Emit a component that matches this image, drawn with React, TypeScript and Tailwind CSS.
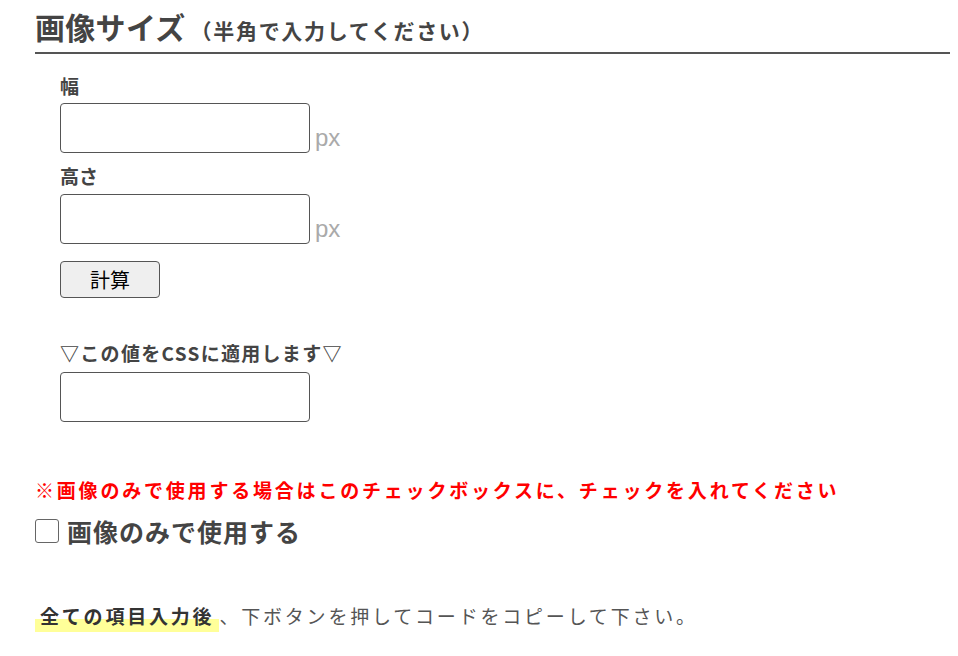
import React from "react";

export default function App() {
  const font = { fontFamily: '"Noto Sans CJK JP", "Noto Sans", sans-serif' };
  const arial = { fontFamily: '"Liberation Sans", Arial, sans-serif' };
  return (
    <div className="bg-white w-[958px] h-[656px] overflow-hidden text-[#444]" style={font}>
      <div className="pl-[35px] pr-[8px] pt-[6px]">
        <h2 className="border-b-2 border-[#555] pb-[6px] leading-[40px] font-bold text-[30px] tracking-[0.3px] text-[#444]">
          画像サイズ
          <span className="text-[21px] leading-[20px] tracking-[0.08em] ml-[5px]">（半角で入力してください）</span>
        </h2>
        <div className="pl-[25px] pt-[19px]">
          <div className="text-[19px] font-bold leading-[26px]">幅</div>
          <div className="flex items-end mt-[4px]">
            <input className="w-[250px] h-[50px] border border-[#555] rounded-[4px] bg-white" />
            <span className="text-[24px] text-[#aaa] ml-[5px] leading-[24px] mb-[3px]" style={arial}>px</span>
          </div>
          <div className="text-[19px] font-bold leading-[26px] mt-[10px]">高さ</div>
          <div className="flex items-end mt-[5px]">
            <input className="w-[250px] h-[50px] border border-[#555] rounded-[4px] bg-white" />
            <span className="text-[24px] text-[#aaa] ml-[5px] leading-[24px] mb-[3px]" style={arial}>px</span>
          </div>
          <button className="mt-[17px] w-[100px] h-[37px] border border-[#555] rounded-[4px] bg-[#efefef] text-[20px] text-black leading-none">
            計算
          </button>
          <div className="text-[19px] font-bold leading-[26px] mt-[42px] tracking-[1.3px]">▽この値をCSSに適用します▽</div>
          <div className="mt-[6px]">
            <input className="w-[250px] h-[50px] border border-[#555] rounded-[4px] bg-white block" />
          </div>
        </div>
        <div className="mt-[54px] text-[19px] font-bold text-[#ff0000] tracking-[2.8px] leading-[28px]">
          ※画像のみで使用する場合はこのチェックボックスに、チェックを入れてください
        </div>
        <label className="flex items-center mt-[12px] h-[30px]">
          <span className="w-[24px] h-[24px] border border-[#666] rounded-[3px] bg-white inline-block shrink-0"></span>
          <span className="ml-[8px] text-[25px] font-bold tracking-[1px] leading-[30px]">画像のみで使用する</span>
        </label>
        <p className="mt-[56px] text-[19px] tracking-[2.8px] leading-[28px] text-[#555]">
          <span className="font-bold text-[#333] px-[5px] pb-[3px] bg-[linear-gradient(transparent_58%,#ffff99_58%)]">全ての項目入力後</span>
          、下ボタンを押してコードをコピーして下さい。
        </p>
      </div>
    </div>
  );
}
